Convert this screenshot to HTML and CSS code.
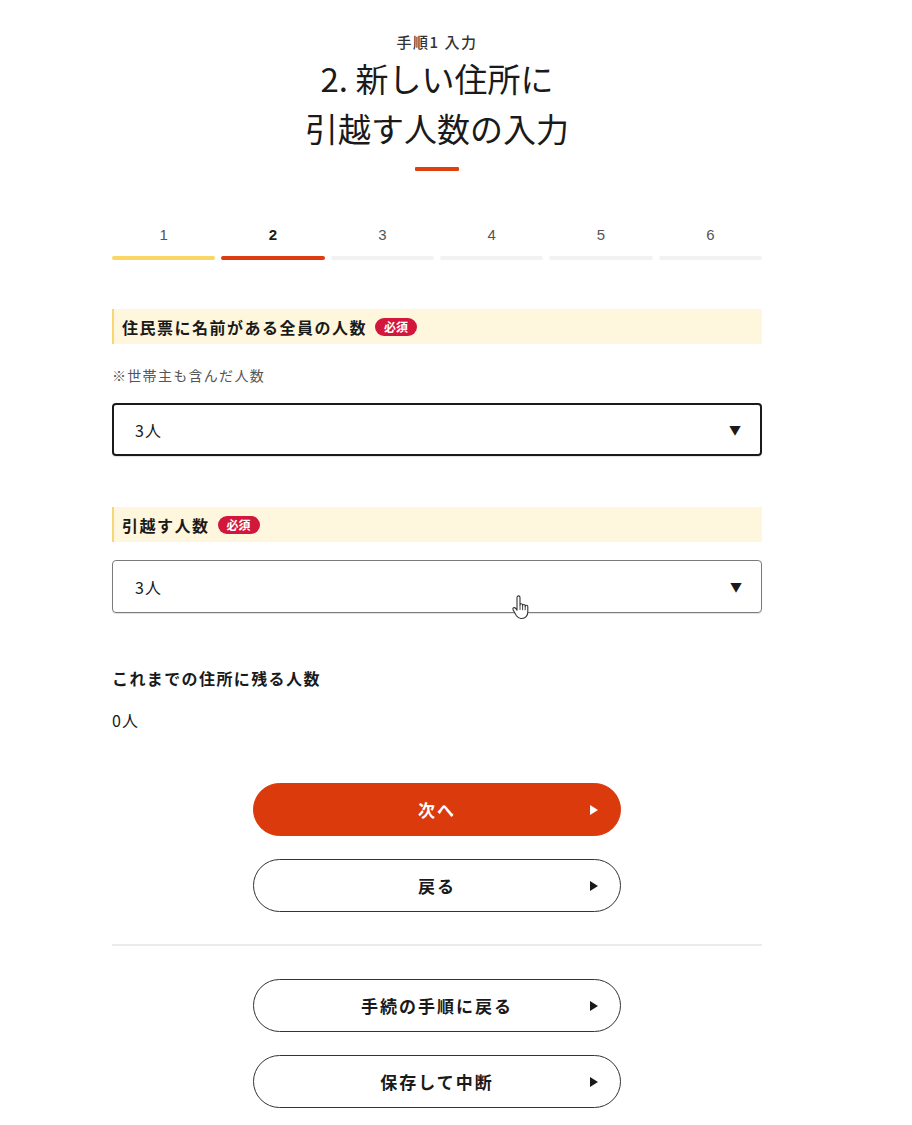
FILE: index.html
```html
<!DOCTYPE html>
<html lang="ja">
<head>
<meta charset="utf-8">
<title>引越す人数の入力</title>
<link rel="stylesheet" href="styles.css">
</head>
<body>
<main class="page">
  <header class="head">
    <p class="eyebrow">手順1 入力</p>
    <h1 class="title">2. 新しい住所に<br>引越す人数の入力</h1>
    <div class="title-bar"></div>
  </header>

  <ol class="steps">
    <li class="step done"><span class="num">1</span><span class="bar"></span></li>
    <li class="step current"><span class="num">2</span><span class="bar"></span></li>
    <li class="step"><span class="num">3</span><span class="bar"></span></li>
    <li class="step"><span class="num">4</span><span class="bar"></span></li>
    <li class="step"><span class="num">5</span><span class="bar"></span></li>
    <li class="step"><span class="num">6</span><span class="bar"></span></li>
  </ol>

  <section class="field first">
    <div class="label">住民票に名前がある全員の人数<span class="badge">必須</span></div>
    <p class="note">※世帯主も含んだ人数</p>
    <div class="select focused"><span>3人</span><span class="caret">▼</span></div>
  </section>

  <section class="field second">
    <div class="label">引越す人数<span class="badge">必須</span></div>
    <div class="select"><span>3人</span><span class="caret">▼</span>
      <svg class="cursor" width="20" height="26" viewBox="0 0 20 26"><path d="M6 2.5c0-1 .7-1.6 1.5-1.6S9 1.5 9 2.5V10c0-.8.6-1.3 1.3-1.3s1.3.5 1.3 1.3v.8c0-.8.6-1.3 1.3-1.3s1.3.5 1.3 1.3v.8c0-.8.6-1.3 1.3-1.3s1.3.5 1.3 1.3v5.5c0 3.5-2.4 6.4-6 6.4H10c-2.2 0-3.4-1-4.6-2.7L2.2 15c-.6-.9-.3-1.8.4-2.2.7-.4 1.500-.2 2.1.6L6 15.2V2.5z" fill="#fff" stroke="#333" stroke-width="1.1" stroke-linejoin="round"/><path d="M9 10v5M11.6 10.8v4.4M14.2 11.6v3.6" stroke="#333" stroke-width="0.9"/></svg>
    </div>
  </section>

  <section class="remain">
    <p class="remain-label">これまでの住所に残る人数</p>
    <p class="remain-value">0人</p>
  </section>

  <div class="actions">
    <button class="btn primary"><span>次へ</span><i class="tri"></i></button>
    <button class="btn"><span>戻る</span><i class="tri"></i></button>
  </div>

  <hr class="divider">

  <div class="actions bottom">
    <button class="btn"><span>手続の手順に戻る</span><i class="tri"></i></button>
    <button class="btn"><span>保存して中断</span><i class="tri"></i></button>
  </div>
</main>
</body>
</html>
```

FILE: styles.css
```css
* { box-sizing: border-box; }
html, body { margin: 0; padding: 0; background: #fff; }
body {
  font-family: "Noto Sans CJK JP", "Noto Sans", sans-serif;
  color: #1a1a1a;
}
p { margin: 0; }
.page {
  width: 650px;
  margin-left: 112px;
  padding-top: 32px;
  padding-bottom: 20px;
}
.head { display: flex; flex-direction: column; align-items: center; }
.eyebrow {
  font-size: 15px;
  line-height: 20px;
  letter-spacing: 1.5px;
  font-weight: 500;
  color: #333;
}
.title {
  margin: 1px 0 0;
  font-size: 33px;
  line-height: 50px;
  font-weight: 400;
  text-align: center;
  color: #1a1a1a;
}
.title-bar {
  width: 44px;
  height: 4px;
  margin-top: 14px;
  background: #e0400f;
  border-radius: 1px;
}
.steps {
  list-style: none;
  margin: 54px 0 0;
  padding: 0;
  display: flex;
  gap: 6px;
}
.step {
  flex: 1;
  display: flex;
  flex-direction: column;
  align-items: center;
}
.num {
  font-family: "Liberation Sans", "Noto Sans", sans-serif;
  font-size: 15px;
  line-height: 20px;
  color: #555;
}
.step.current .num { color: #1a1a1a; font-weight: 700; }
.bar {
  margin-top: 11px;
  width: 100%;
  height: 4px;
  border-radius: 2px;
  background: #f2f2f2;
}
.step.done .bar { background: #fad664; }
.step.current .bar { background: #dd3c12; }

.field.first { margin-top: 49px; }
.field.second { margin-top: 51px; }
.label {
  height: 35px;
  display: flex;
  align-items: center;
  padding-left: 8px;
  border-left: 2px solid #f7d774;
  background: #fff7dd;
  font-size: 16px;
  letter-spacing: 1.5px;
  font-weight: 700;
  color: #1a1a1a;
}
.badge {
  margin-left: 8px;
  height: 18px;
  padding: 0 9px;
  border-radius: 9px;
  background: #d2163c;
  color: #fff;
  font-size: 12px;
  letter-spacing: 0;
  line-height: 18px;
  font-weight: 700;
}
.note {
  margin-top: 21px;
  font-size: 14px;
  letter-spacing: 1.3px;
  line-height: 20px;
  color: #555;
}
.select {
  position: relative;
  margin-top: 18px;
  height: 53px;
  display: flex;
  align-items: center;
  justify-content: space-between;
  padding: 0 19px 0 22px;
  border: 1.5px solid #7a7a7a;
  border-radius: 4px;
  font-size: 16px;
  letter-spacing: 1px;
  color: #1a1a1a;
  box-shadow: 0 1px 1px rgba(0,0,0,0.12);
}
.select.focused { border: 2px solid #1a1a1a; padding-left: 21px; }
.caret { font-size: 12px; color: #1a1a1a; letter-spacing: 0; }
.cursor {
  position: absolute;
  left: 398px;
  top: 34px;
}
.remain { margin-top: 55px; }
.remain-label {
  font-size: 16px;
  letter-spacing: 1.4px;
  line-height: 20px;
  font-weight: 700;
}
.remain-value {
  margin-top: 22px;
  font-size: 16px;
  letter-spacing: 1px;
  line-height: 20px;
}
.actions {
  margin-top: 53px;
  display: flex;
  flex-direction: column;
  align-items: center;
  gap: 23px;
}
.actions.bottom { margin-top: 33px; }
.btn {
  position: relative;
  width: 368px;
  height: 53px;
  border-radius: 27px;
  border: 1.5px solid #333;
  background: #fff;
  color: #1a1a1a;
  font-family: inherit;
  font-size: 17px;
  letter-spacing: 2px;
  font-weight: 700;
  display: flex;
  align-items: center;
  justify-content: center;
  padding: 0;
}
.btn.primary {
  background: #da3a0c;
  border-color: #da3a0c;
  color: #fff;
}
.tri {
  position: absolute;
  right: 22px;
  top: 50%;
  margin-top: -5px;
  width: 0;
  height: 0;
  border-top: 5px solid transparent;
  border-bottom: 5px solid transparent;
  border-left: 8px solid #1a1a1a;
}
.btn.primary .tri { border-left-color: #fff; }
.divider {
  margin: 32px 0 0;
  border: 0;
  height: 2px;
  background: #ebebeb;
}
```
